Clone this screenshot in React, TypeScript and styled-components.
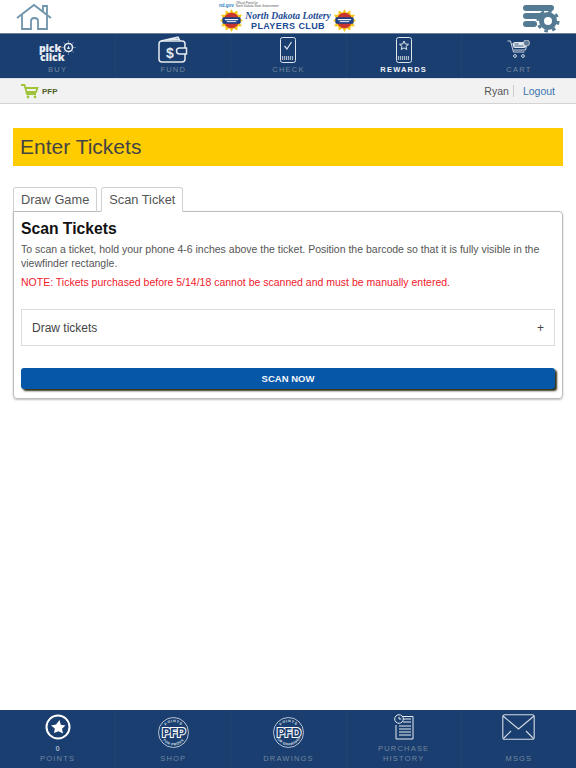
import { ReactNode } from 'react';
import styled, { createGlobalStyle } from 'styled-components';

const GlobalStyle = createGlobalStyle`
  html, body {
    margin: 0;
    padding: 0;
    background: #fff;
    font-family: "Liberation Sans", Arial, sans-serif;
  }
  * { box-sizing: border-box; }
`;

const Page = styled.div`
  width: 576px;
  height: 768px;
  display: flex;
  flex-direction: column;
  overflow: hidden;
`;

const Header = styled.header`
  height: 34px;
  flex: none;
  display: grid;
  grid-template-columns: 1fr auto 1fr;
  align-items: center;
  padding: 0 16px;
  border-bottom: 1px solid #6d7f96;
`;

const SettingsSlot = styled.div`
  justify-self: end;
  height: 28px;
  margin-top: 4px;
`;

const Brand = styled.div`
  display: flex;
  flex-direction: column;
  align-items: center;
  width: 138px;
`;

const GovLine = styled.div`
  display: flex;
  align-items: center;
  gap: 2px;
  align-self: flex-start;
  height: 8px;
  font-size: 3px;
  line-height: 3px;
  color: #555;
  b { font-size: 4.5px; color: #2b7cc4; }
`;

const BrandRow = styled.div`
  display: flex;
  align-items: center;
  gap: 2px;
  height: 23px;
`;

const BrandTitle = styled.div`
  display: flex;
  flex-direction: column;
  align-items: center;
  color: #1c4a94;
  line-height: 10px;
  i {
    font-family: "Liberation Serif", serif;
    font-weight: 700;
    font-size: 9.6px;
    white-space: nowrap;
  }
  b { font-size: 9px; letter-spacing: 0.4px; white-space: nowrap; }
`;

const NavBar = styled.nav<{ $height: number; $pad: number }>`
  height: ${({ $height }) => $height}px;
  flex: none;
  display: grid;
  grid-template-columns: repeat(5, 1fr);
  background: #1a3e6f;
  --nav-pad: ${({ $pad }) => $pad}px;
`;

const NavItem = styled.div`
  display: flex;
  flex-direction: column;
  align-items: center;
  justify-content: flex-end;
  padding-bottom: var(--nav-pad);
  border-left: 1px solid #1f4474;
  &:first-child { border-left: 0; }
`;

const NavIcon = styled.div<{ $lift?: number }>`
  flex: 1;
  display: flex;
  align-items: center;
  justify-content: center;
  min-height: 0;
  padding-bottom: ${({ $lift }) => $lift ?? 0}px;
`;

const NavLabel = styled.span<{ $active?: boolean }>`
  font-size: 7.5px;
  line-height: 10px;
  letter-spacing: 1.2px;
  text-align: center;
  color: ${({ $active }) => ($active ? '#f0f3f7' : '#71869f')};
  font-weight: ${({ $active }) => ($active ? 700 : 400)};
`;

const PointCount = styled.span`
  font-size: 7.5px;
  line-height: 10px;
  font-weight: 700;
  color: #9fb0c4;
`;

const PickLogo = styled.div`
  margin-top: 6px;
  color: #e9edf2;
  font-family: "Open Sans", sans-serif;
  font-weight: 800;
  font-size: 10.5px;
  line-height: 10px;
  letter-spacing: -0.1px;
`;

const PickRow = styled.div`
  display: flex;
  align-items: center;
  height: 9px;
`;

const ClickRow = styled.div`
  height: 10px;
  margin-left: 1px;
`;

const SubBar = styled.div`
  height: 26px;
  flex: none;
  display: flex;
  align-items: center;
  justify-content: space-between;
  padding: 0 21px;
  background: #f2f2f2;
  border-top: 1px solid #dcdfe3;
  border-bottom: 1px solid #d4d4d4;
`;

const CartLink = styled.div`
  display: flex;
  align-items: center;
  gap: 3px;
  font-size: 8px;
  font-weight: 700;
  color: #4f6028;
`;

const UserLinks = styled.div`
  display: flex;
  align-items: center;
  font-size: 10.5px;
  color: #555;
`;

const LogoutLink = styled.a`
  margin-left: 4px;
  padding-left: 9px;
  border-left: 1px solid #ccc;
  color: #3a74ad;
`;

const Main = styled.main`
  flex: 1;
  padding: 24px 13px 0;
`;

const TitleBanner = styled.h1`
  margin: 0 0 21px;
  height: 38px;
  padding-left: 7px;
  background: #ffcc00;
  color: #444;
  font-size: 21px;
  font-weight: 400;
  line-height: 38px;
`;

const Tabs = styled.div`
  display: flex;
  gap: 4px;
  margin-bottom: -1px;
  position: relative;
  z-index: 1;
`;

const Tab = styled.div<{ $active?: boolean }>`
  height: 25px;
  padding: 0 7px;
  font-size: 12.8px;
  line-height: 24px;
  color: #555;
  background: #fff;
  border: 1px solid #d0d0d0;
  border-bottom: ${({ $active }) => ($active ? '1px solid #fff' : '1px solid #bbb')};
  border-radius: 3px 3px 0 0;
`;

const Panel = styled.section`
  height: 188px;
  padding: 7px 7px 0;
  border: 1px solid #bdbdbd;
  border-radius: 0 4px 4px 4px;
  box-shadow: 0 1px 2px rgba(0, 0, 0, 0.25);
`;

const PanelTitle = styled.h2`
  margin: 0;
  font-size: 15.7px;
  line-height: 20px;
  font-weight: 700;
  color: #111;
`;

const BodyText = styled.p`
  margin: 4px 0 0;
  font-size: 10.5px;
  line-height: 13.5px;
  color: #555;
`;

const NoteText = styled.p`
  margin: 5px 0 0;
  font-size: 10.5px;
  line-height: 14px;
  color: #f0202c;
`;

const Accordion = styled.div`
  height: 37px;
  margin-top: 20px;
  padding: 0 10px;
  display: flex;
  align-items: center;
  justify-content: space-between;
  border: 1px solid #dcdcdc;
  font-size: 12px;
  color: #444;
`;

const ScanButton = styled.button`
  display: block;
  width: 100%;
  height: 21px;
  margin-top: 22px;
  padding: 0;
  border: 0;
  border-radius: 3px;
  background: #0657a8;
  color: #f3f6fa;
  font: 700 9.5px "Liberation Sans", Arial, sans-serif;
  box-shadow: 2px 2px 2px #2f2f12;
`;

const HouseIcon = () => (
  <svg width="37" height="28" viewBox="0 0 37 28" fill="none" stroke="#6f94ab" strokeWidth="1.8">
    <path d="M1 15 18 2l17 13" />
    <path d="M6 12v14h9v-8c0-4 7-4 7 0v8h9V12" />
    <path d="M27 8V3h4v8" />
  </svg>
);

const SettingsIcon = () => (
  <svg width="38" height="28" viewBox="0 0 38 28">
    <g fill="#557a94">
      <rect x="1" y="0" width="31" height="6" rx="3" />
      <rect x="1" y="8" width="20" height="6" rx="3" />
      <rect x="1" y="16" width="14" height="6" rx="3" />
    </g>
    <circle cx="26" cy="16" r="6.5" fill="none" stroke="#557a94" strokeWidth="5" />
    <circle
      cx="26"
      cy="16"
      r="10"
      fill="none"
      stroke="#557a94"
      strokeWidth="3"
      strokeDasharray="3.5 4.35"
    />
  </svg>
);

const Seal = () => (
  <svg width="23" height="23" viewBox="0 0 24 24">
    <polygon
      points="12,0 14,4 18,1.5 18.5,6 23,6 20.5,10 24,12 20.5,14.5 23,18 18.5,18 18,22.5 14,20 12,24 10,20 6,22.5 5.5,18 1,18 3.5,14.5 0,12 3.5,10 1,6 5.5,6 6,1.5 10,4"
      fill="#f6c516"
    />
    <circle cx="12" cy="12" r="8" fill="#c9362f" />
    <rect x="2.5" y="8.5" width="19" height="7" rx="1.5" fill="#1c3f86" />
    <rect x="5" y="10.5" width="14" height="1.2" fill="#fff" />
    <rect x="7" y="12.7" width="10" height="1" fill="#fff" />
  </svg>
);

const BurstIcon = () => (
  <svg width="15" height="15" viewBox="0 0 15 15" fill="none" stroke="#e9edf2">
    <path
      d="M7.5 0v3M7.5 12v3M0 7.5h3M12 7.5h3M2.2 2.2l2 2M10.8 10.8l2 2M12.8 2.2l-2 2M4.2 10.8l-2 2"
      strokeWidth="0.6"
      stroke="#8fa3bb"
    />
    <circle cx="7.5" cy="7.5" r="4" strokeWidth="1.6" />
    <path d="M7.5 5.5 6 9h3z" fill="#e9edf2" stroke="none" />
  </svg>
);

const WalletIcon = () => (
  <svg width="30" height="28" viewBox="0 0 30 28" fill="none" stroke="#e6ebf1" strokeWidth="1.5">
    <rect x="1" y="5" width="26" height="21" rx="3" />
    <path d="M3 5 20 1l2 4M9 4l12-1" />
    <path d="M28.5 12h-7a3 3 0 0 0 0 6h7z" fill="#1a3e6f" />
    <text x="8" y="22" fontSize="14" fontWeight="700" fill="#e6ebf1" stroke="none" fontFamily="Liberation Sans">
      $
    </text>
  </svg>
);

const TicketPhone = ({ children }: { children: ReactNode }) => (
  <svg width="16" height="26" viewBox="0 0 16 26" fill="none" stroke="#dfe5ec" strokeWidth="1">
    <rect x="0.5" y="0.5" width="15" height="25" rx="2" />
    {children}
    <path d="M2.5 19v4M4.5 19v4M6.5 19v4M8.5 19v4M10.5 19v4M12.5 19v4" strokeWidth="1.2" stroke="#aab6c5" />
  </svg>
);

const CartIcon = () => (
  <svg width="18" height="15" viewBox="0 0 18 15" fill="none" stroke="#9fc43a" strokeWidth="1.8">
    <path d="M0 1h3.5l2.5 9h9" />
    <path d="M4 4h12.5L15 8H6" />
    <circle cx="7" cy="13" r="1.4" fill="#9fc43a" stroke="none" />
    <circle cx="14" cy="13" r="1.4" fill="#9fc43a" stroke="none" />
  </svg>
);

const PickCartIcon = () => (
  <svg width="23" height="19" viewBox="0 0 23 19" fill="none" stroke="#dfe5ec" strokeWidth="0.9">
    <path d="M0.5 1h3l3 11h11" />
    <path d="M4.5 4H20l-1.5 6H6.5" />
    <rect x="6" y="2" width="13" height="6" rx="2" fill="#dfe5ec" stroke="none" />
    <circle cx="19.5" cy="3" r="3" fill="#5f7895" strokeWidth="0.7" />
    <path d="M7.5 4h4M7.5 6h9" stroke="#1a3e6f" strokeWidth="0.8" />
    <circle cx="8" cy="16" r="1.4" />
    <circle cx="16" cy="16" r="1.4" />
  </svg>
);

const StarBadge = () => (
  <svg width="26" height="26" viewBox="0 0 26 26">
    <circle cx="13" cy="13" r="11.5" fill="none" stroke="#fff" strokeWidth="2" />
    <polygon
      points="14.5,6 15.8,10.8 20.5,11.5 17,14.8 18,19.5 13.5,17.3 9,19 9.8,14.5 6,11.5 11,10.5"
      fill="#fff"
    />
  </svg>
);

const PfpBadge = ({ last, top, bottom }: { last: string; top: string; bottom: string }) => (
  <svg width="31" height="31" viewBox="0 0 31 31" fontFamily="Liberation Sans" fontWeight="700">
    <defs>
      <path id={`arc-top-${last}`} d="M5.2 15.5a10.3 10.3 0 0 1 20.6 0" />
      <path id={`arc-bottom-${last}`} d="M2.6 15.5a12.9 12.9 0 0 0 25.8 0" />
    </defs>
    <circle cx="15.5" cy="15.5" r="15" fill="none" stroke="#dfe5ec" strokeWidth="0.8" />
    <text fontSize="3.6" fill="#dfe5ec" letterSpacing="0.7">
      <textPath href={`#arc-top-${last}`} startOffset="50%" textAnchor="middle">
        {top}
      </textPath>
    </text>
    <text fontSize="3.4" fill="#dfe5ec" letterSpacing="0.4">
      <textPath href={`#arc-bottom-${last}`} startOffset="50%" textAnchor="middle">
        {bottom}
      </textPath>
    </text>
    <text
      x="15.5"
      y="20"
      textAnchor="middle"
      fontSize="13"
      fill="#1a3e6f"
      stroke="#fff"
      strokeWidth="2"
      paintOrder="stroke"
      letterSpacing="-0.8"
    >
      PF{last}
    </text>
  </svg>
);

const HistoryIcon = () => (
  <svg width="21" height="26" viewBox="0 0 21 26" fill="none" stroke="#e6ebf1" strokeWidth="1">
    <path d="M8 2.5h12v22.5H3V11" />
    <path d="M10 5h8M10 8h8M6 12h12M6 15h12M6 18h12M6 21h12" strokeWidth="1.2" />
    <circle cx="6" cy="5" r="4.3" fill="#1a3e6f" />
    <path d="M6 2.8V5h2.2" />
  </svg>
);

const MailIcon = () => (
  <svg width="33" height="26" viewBox="0 0 33 26" fill="none" stroke="#d5dce5" strokeWidth="1.1">
    <rect x="0.8" y="0.8" width="31.4" height="24.4" rx="2" />
    <path d="M1 2 16.5 15 32 2M2 24l7-7M31 24l-7-7" />
  </svg>
);

const topNav: { label: string; active?: boolean; icon: ReactNode }[] = [
  {
    label: 'BUY',
    icon: (
      <PickLogo>
        <PickRow>
          pick
          <BurstIcon />
        </PickRow>
        <ClickRow>click</ClickRow>
      </PickLogo>
    ),
  },
  { label: 'FUND', icon: <WalletIcon /> },
  {
    label: 'CHECK',
    icon: (
      <TicketPhone>
        <path d="M4.5 9l2.5 3 4.5-7" strokeWidth="1.2" />
      </TicketPhone>
    ),
  },
  {
    label: 'REWARDS',
    active: true,
    icon: (
      <TicketPhone>
        <polygon points="8,4 9.3,7 12.5,7.3 10,9.4 10.8,12.5 8,10.9 5.2,12.5 6,9.4 3.5,7.3 6.7,7" />
      </TicketPhone>
    ),
  },
  { label: 'CART', icon: <PickCartIcon /> },
];

const bottomNav: { label: ReactNode; count?: string; lift?: number; icon: ReactNode }[] = [
  { label: 'POINTS', count: '0', icon: <StarBadge /> },
  { label: 'SHOP', icon: <PfpBadge last="P" top="POINTS" bottom="FOR PRIZES" /> },
  { label: 'DRAWINGS', icon: <PfpBadge last="D" top="POINTS" bottom="FOR DRAWINGS" /> },
  {
    label: (
      <>
        PURCHASE
        <br />
        HISTORY
      </>
    ),
    icon: <HistoryIcon />,
  },
  { label: 'MSGS', lift: 10, icon: <MailIcon /> },
];

export default function App() {
  return (
    <Page>
      <GlobalStyle />
      <Header>
        <HouseIcon />
        <Brand>
          <GovLine>
            <b>nd.gov</b>
            <span>
              Official Portal for
              <br />
              North Dakota State Government
            </span>
          </GovLine>
          <BrandRow>
            <Seal />
            <BrandTitle>
              <i>North Dakota Lottery</i>
              <b>PLAYERS CLUB</b>
            </BrandTitle>
            <Seal />
          </BrandRow>
        </Brand>
        <SettingsSlot>
          <SettingsIcon />
        </SettingsSlot>
      </Header>
      <NavBar $height={44} $pad={3}>
        {topNav.map(({ label, active, icon }) => (
          <NavItem key={label}>
            <NavIcon>{icon}</NavIcon>
            <NavLabel $active={active}>{label}</NavLabel>
          </NavItem>
        ))}
      </NavBar>
      <SubBar>
        <CartLink>
          <CartIcon />
          PFP
        </CartLink>
        <UserLinks>
          Ryan
          <LogoutLink>Logout</LogoutLink>
        </UserLinks>
      </SubBar>
      <Main>
        <TitleBanner>Enter Tickets</TitleBanner>
        <Tabs>
          <Tab>Draw Game</Tab>
          <Tab $active>Scan Ticket</Tab>
        </Tabs>
        <Panel>
          <PanelTitle>Scan Tickets</PanelTitle>
          <BodyText>
            To scan a ticket, hold your phone 4-6 inches above the ticket. Position the barcode so that it is fully
            visible in the viewfinder rectangle.
          </BodyText>
          <NoteText>NOTE: Tickets purchased before 5/14/18 cannot be scanned and must be manually entered.</NoteText>
          <Accordion>
            Draw tickets
            <span>+</span>
          </Accordion>
          <ScanButton>SCAN NOW</ScanButton>
        </Panel>
      </Main>
      <NavBar $height={58} $pad={4}>
        {bottomNav.map(({ label, count, lift, icon }, i) => (
          <NavItem key={i}>
            <NavIcon $lift={lift}>{icon}</NavIcon>
            {count && <PointCount>{count}</PointCount>}
            <NavLabel>{label}</NavLabel>
          </NavItem>
        ))}
      </NavBar>
    </Page>
  );
}
